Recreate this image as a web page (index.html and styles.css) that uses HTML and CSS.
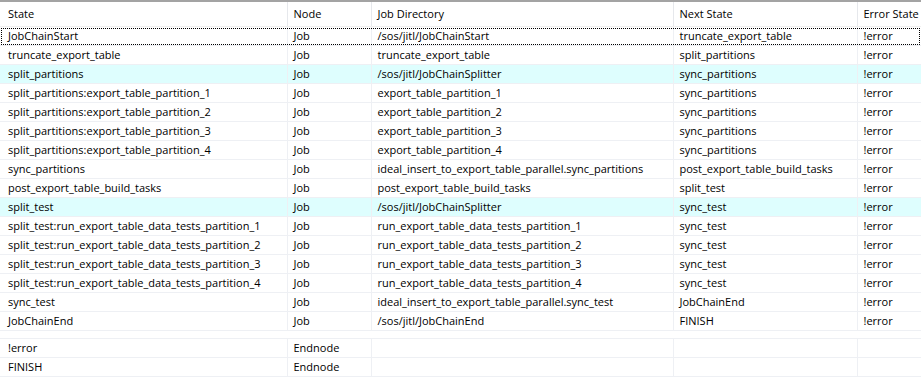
FILE: index.html
```html
<!DOCTYPE html>
<html lang="en">
<head>
    <meta charset="UTF-8">
    <title>Job Chain Nodes</title>
    <link rel="stylesheet" href="styles.css">
</head>
<body>
    <div class="grid-top">
        <table class="nodes">
            <colgroup>
                <col class="c-state"><col class="c-node"><col class="c-dir"><col class="c-next"><col class="c-error">
            </colgroup>
            <thead>
                <tr>
                    <th>State</th>
                    <th>Node</th>
                    <th>Job Directory</th>
                    <th>Next State</th>
                    <th>Error State</th>
                </tr>
            </thead>
            <tbody>
                <tr class="focused"><td>JobChainStart</td><td>Job</td><td>/sos/jitl/JobChainStart</td><td>truncate_export_table</td><td>!error</td></tr>
                <tr><td>truncate_export_table</td><td>Job</td><td>truncate_export_table</td><td>split_partitions</td><td>!error</td></tr>
                <tr class="splitter"><td>split_partitions</td><td>Job</td><td>/sos/jitl/JobChainSplitter</td><td>sync_partitions</td><td>!error</td></tr>
                <tr><td>split_partitions:export_table_partition_1</td><td>Job</td><td>export_table_partition_1</td><td>sync_partitions</td><td>!error</td></tr>
                <tr><td>split_partitions:export_table_partition_2</td><td>Job</td><td>export_table_partition_2</td><td>sync_partitions</td><td>!error</td></tr>
                <tr><td>split_partitions:export_table_partition_3</td><td>Job</td><td>export_table_partition_3</td><td>sync_partitions</td><td>!error</td></tr>
                <tr><td>split_partitions:export_table_partition_4</td><td>Job</td><td>export_table_partition_4</td><td>sync_partitions</td><td>!error</td></tr>
                <tr><td>sync_partitions</td><td>Job</td><td>ideal_insert_to_export_table_parallel.sync_partitions</td><td>post_export_table_build_tasks</td><td>!error</td></tr>
                <tr><td>post_export_table_build_tasks</td><td>Job</td><td>post_export_table_build_tasks</td><td>split_test</td><td>!error</td></tr>
                <tr class="splitter"><td>split_test</td><td>Job</td><td>/sos/jitl/JobChainSplitter</td><td>sync_test</td><td>!error</td></tr>
                <tr><td>split_test:run_export_table_data_tests_partition_1</td><td>Job</td><td>run_export_table_data_tests_partition_1</td><td>sync_test</td><td>!error</td></tr>
                <tr><td>split_test:run_export_table_data_tests_partition_2</td><td>Job</td><td>run_export_table_data_tests_partition_2</td><td>sync_test</td><td>!error</td></tr>
                <tr><td>split_test:run_export_table_data_tests_partition_3</td><td>Job</td><td>run_export_table_data_tests_partition_3</td><td>sync_test</td><td>!error</td></tr>
                <tr><td>split_test:run_export_table_data_tests_partition_4</td><td>Job</td><td>run_export_table_data_tests_partition_4</td><td>sync_test</td><td>!error</td></tr>
                <tr><td>sync_test</td><td>Job</td><td>ideal_insert_to_export_table_parallel.sync_test</td><td>JobChainEnd</td><td>!error</td></tr>
                <tr><td>JobChainEnd</td><td>Job</td><td>/sos/jitl/JobChainEnd</td><td>FINISH</td><td>!error</td></tr>
            </tbody>
        </table>
    </div>

    <!-- end nodes -->
    <div class="grid-bottom">
        <table class="nodes endnodes">
            <colgroup>
                <col class="c-state"><col class="c-node"><col class="c-dir"><col class="c-next"><col class="c-error">
            </colgroup>
            <tbody>
                <tr><td>!error</td><td>Endnode</td><td></td><td></td><td></td></tr>
                <tr><td>FINISH</td><td>Endnode</td><td></td><td></td><td></td></tr>
            </tbody>
        </table>
    </div>
</body>
</html>
```

FILE: styles.css
```css
body {
    margin: 0;
    width: 921px;
    height: 377px;
    overflow: hidden;
    background-color: #fff;
    font-family: "Open Sans", "Noto Sans", sans-serif;
    font-size: 11px;
    color: #000;
}

.grid-top {
    border-top: 2px solid #a3a3a3;
}

.grid-bottom {
    margin-top: 7px;
}

table.nodes {
    width: 921px;
    table-layout: fixed;
    border-collapse: collapse;
}

.c-state { width: 287px; }
.c-node { width: 84px; }
.c-dir { width: 302px; }
.c-next { width: 184px; }
.c-error { width: 64px; }

th, td {
    padding: 0 0 0 6px;
    text-align: left;
    white-space: nowrap;
    overflow: hidden;
    font-weight: normal;
    border-left: 1px solid #eef0f4;
}

th:first-child, td:first-child {
    padding-left: 8px;
    border-left: none;
}

th {
    height: 24px;
    line-height: 24px;
    background-color: #fff;
    border-left-color: #e6e8ec;
    border-bottom: 1px solid #f0f0f0;
}

td {
    height: 18px;
    line-height: 18px;
    border-bottom: 1px solid #eef0f4;
}

tr.splitter td {
    background-color: #defefe;
}

tr.focused {
    outline: 1px dotted #000;
    outline-offset: -2px;
}

.endnodes {
    border-top: 1px solid #eef0f4;
}
```
